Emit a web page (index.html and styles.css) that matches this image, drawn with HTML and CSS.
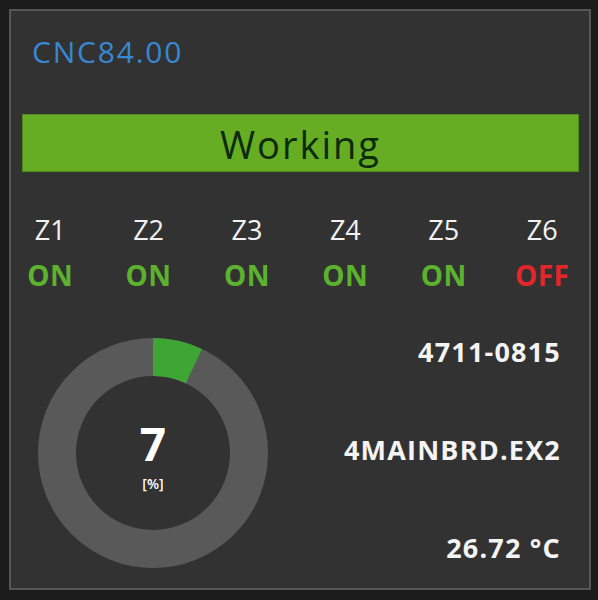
FILE: index.html
```html
<html>
<head>
	<meta http-equiv="Content-Type" content="text/html; charset=utf-8" />
	<link rel="stylesheet" href="styles.css">
</head>
<body>
<div class="panel">
	<div class="title">CNC84.00</div>
	<div class="state">Working</div>

	<div class="zones">
		<div class="zone"><span class="zname">Z1</span><span class="on">ON</span></div>
		<div class="zone"><span class="zname">Z2</span><span class="on">ON</span></div>
		<div class="zone"><span class="zname">Z3</span><span class="on">ON</span></div>
		<div class="zone"><span class="zname">Z4</span><span class="on">ON</span></div>
		<div class="zone"><span class="zname">Z5</span><span class="on">ON</span></div>
		<div class="zone"><span class="zname">Z6</span><span class="off">OFF</span></div>
	</div>

	<div class="bottom">
		<div class="gauge">
			<svg width="232" height="232" viewBox="0 0 232 232">
				<circle cx="116" cy="116" r="96" fill="none" stroke="#595959" stroke-width="38" />
				<circle cx="116" cy="116" r="96" fill="none" stroke="#3fa535" stroke-width="38"
					stroke-dasharray="42.2 600" transform="rotate(-90 116 116)" />
			</svg>
			<div class="gvalue">
				<span class="num">7</span>
				<span class="unit">[%]</span>
			</div>
		</div>
		<div class="info">
			<div>4711-0815</div>
			<div>4MAINBRD.EX2</div>
			<div>26.72 °C</div>
		</div>
	</div>
</div>
</body>
</html>
```

FILE: styles.css
```css
body {margin:0; background:#1b1b1b; font-family:"Open Sans", "Noto Sans", sans-serif;}
.panel {margin:9px 7px 0 9px; height:577px; border:2px solid #575757; background:#323232; display:flex; flex-direction:column;}
.title {padding:21px 0 0 21px; height:55px; font-size:30px; line-height:40px; letter-spacing:1.8px; color:#3887d2;}
.state {margin:27px 10px 0 11px; height:56px; border:1px solid #4e8a1c; background:#66ad23;
	font-size:38px; letter-spacing:2px; color:#0c2a0c; text-align:center; line-height:58px;}

.zones {display:grid; grid-template-columns:repeat(6, 98.4px); margin:43px 0 0 -10px;}
.zone {display:flex; flex-direction:column; align-items:center; gap:15px;}
.zname {font-size:27px; color:#f2f2f2; line-height:30px;}
.on, .off {font-size:28px; font-weight:bold; line-height:30px; letter-spacing:0.5px;}
.on {color:#5cb22e;}
.off {color:#e4262c;}

.bottom {display:flex; margin-top:47px;}
.gauge {position:relative; width:232px; height:232px; margin-left:26px;}
.gauge svg {display:block;}
.gvalue {position:absolute; left:0; top:0; width:232px; height:232px; display:flex; flex-direction:column;
	align-items:center; justify-content:center; color:#fff;}
.num {font-size:46px; font-weight:bold; line-height:normal;}
.unit {font-size:14px; font-weight:600; line-height:normal; margin-bottom:2px;}

.info {flex:1; display:flex; flex-direction:column; justify-content:space-between; align-items:flex-end;
	padding:0 28px 0 0; margin-top:-3px; height:232px;
	font-size:27px; line-height:36px; font-weight:bold; letter-spacing:1.2px; color:#f4f4f4;}
```
